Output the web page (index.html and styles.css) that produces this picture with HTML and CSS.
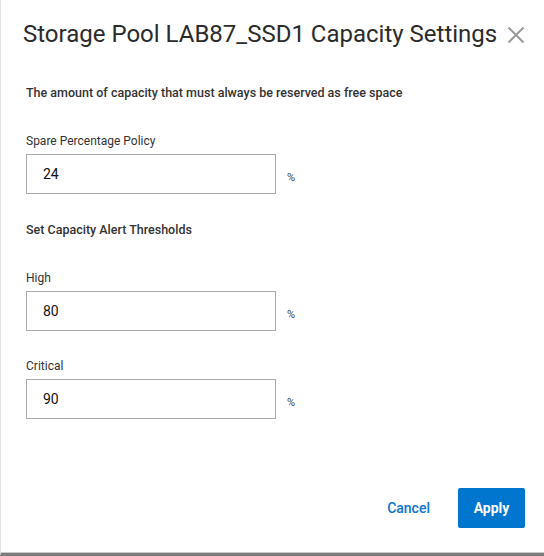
FILE: index.html
```html
<!DOCTYPE html>
<html lang="en">
<head>
<meta charset="utf-8">
<title>Capacity Settings</title>
<link rel="stylesheet" href="styles.css">
</head>
<body>
<div class="dialog">
  <header class="dialog-header">
    <h1 class="dialog-title">Storage Pool LAB87_SSD1 Capacity Settings</h1>
    <button class="close-btn" aria-label="Close">
      <svg width="18" height="18" viewBox="0 0 18 18"><path d="M1.5 1.5 L16.5 16.5 M16.5 1.5 L1.5 16.5" stroke="#9a9a9a" stroke-width="2" fill="none"/></svg>
    </button>
  </header>
  <div class="dialog-body">
    <p class="section-title first">The amount of capacity that must always be reserved as free space</p>
    <div class="field">
      <label class="field-label">Spare Percentage Policy</label>
      <div class="field-row">
        <input class="field-input" type="text" value="24">
        <span class="unit">%</span>
      </div>
    </div>
    <p class="section-title second">Set Capacity Alert Thresholds</p>
    <div class="field spaced">
      <label class="field-label">High</label>
      <div class="field-row">
        <input class="field-input" type="text" value="80">
        <span class="unit">%</span>
      </div>
    </div>
    <div class="field spaced">
      <label class="field-label">Critical</label>
      <div class="field-row">
        <input class="field-input" type="text" value="90">
        <span class="unit">%</span>
      </div>
    </div>
  </div>
  <footer class="dialog-footer">
    <button class="btn-link">Cancel</button>
    <button class="btn-primary">Apply</button>
  </footer>
</div>
</body>
</html>
```
FILE: styles.css
```css
html, body {
  margin: 0;
  padding: 0;
  background: #ffffff;
}

body {
  font-family: Roboto, "Liberation Sans", sans-serif;
  color: #333333;
  width: 544px;
  height: 556px;
  overflow: hidden;
}

.dialog {
  box-sizing: border-box;
  width: 544px;
  height: 556px;
  border-left: 1px solid #e2e2e2;
  border-bottom: 3px solid #7c7c7c;
  box-shadow: inset 0 -1px 0 #c8c8c8;
  display: flex;
  flex-direction: column;
}

.dialog-header {
  display: flex;
  align-items: center;
  justify-content: space-between;
  padding: 20px 19px 0 22px;
  height: 28px;
}

.dialog-title {
  margin: 0;
  font-size: 24px;
  font-weight: 400;
  line-height: 28px;
  color: #2b2b2b;
}

.close-btn {
  border: 0;
  background: none;
  padding: 0;
  width: 18px;
  height: 18px;
  display: flex;
  margin-top: 1px;
}

.dialog-body {
  padding: 0 0 0 25px;
  flex: 1;
}

.section-title {
  margin: 0;
  font-size: 12.5px;
  font-weight: 500;
  line-height: 16px;
  color: #333333;
}

.section-title.first {
  margin-top: 37px;
}

.section-title.second {
  margin-top: 28px;
}

.field {
  margin-top: 33px;
}

.section-title.first + .field {
  margin-top: 33px;
}

.section-title.second + .field {
  margin-top: 33px;
}

.field + .field.spaced {
  margin-top: 28px;
}

.field-label {
  display: block;
  font-size: 12px;
  line-height: 14px;
  color: #333333;
}

.field-row {
  display: flex;
  align-items: center;
  margin-top: 6px;
}

.field-input {
  box-sizing: border-box;
  width: 250px;
  height: 40px;
  border: 1px solid #a9a9a9;
  border-radius: 0;
  padding: 0 0 0 16px;
  font-family: Roboto, "Liberation Sans", sans-serif;
  font-size: 14px;
  color: #111111;
  outline: none;
}

.unit {
  margin-left: 11px;
  margin-top: 7px;
  font-size: 11px;
  color: #444444;
}

.dialog-footer {
  display: flex;
  justify-content: flex-end;
  align-items: center;
  gap: 28px;
  padding: 0 19px 25px 0;
}

.btn-link {
  border: 0;
  background: none;
  padding: 0;
  font-family: Roboto, "Liberation Sans", sans-serif;
  font-size: 14px;
  font-weight: 500;
  color: #0b74cc;
}

.btn-primary {
  border: 0;
  border-radius: 2px;
  background: #0076ce;
  color: #ffffff;
  width: 67px;
  height: 40px;
  font-family: Roboto, "Liberation Sans", sans-serif;
  font-size: 14px;
  font-weight: 700;
}
```
